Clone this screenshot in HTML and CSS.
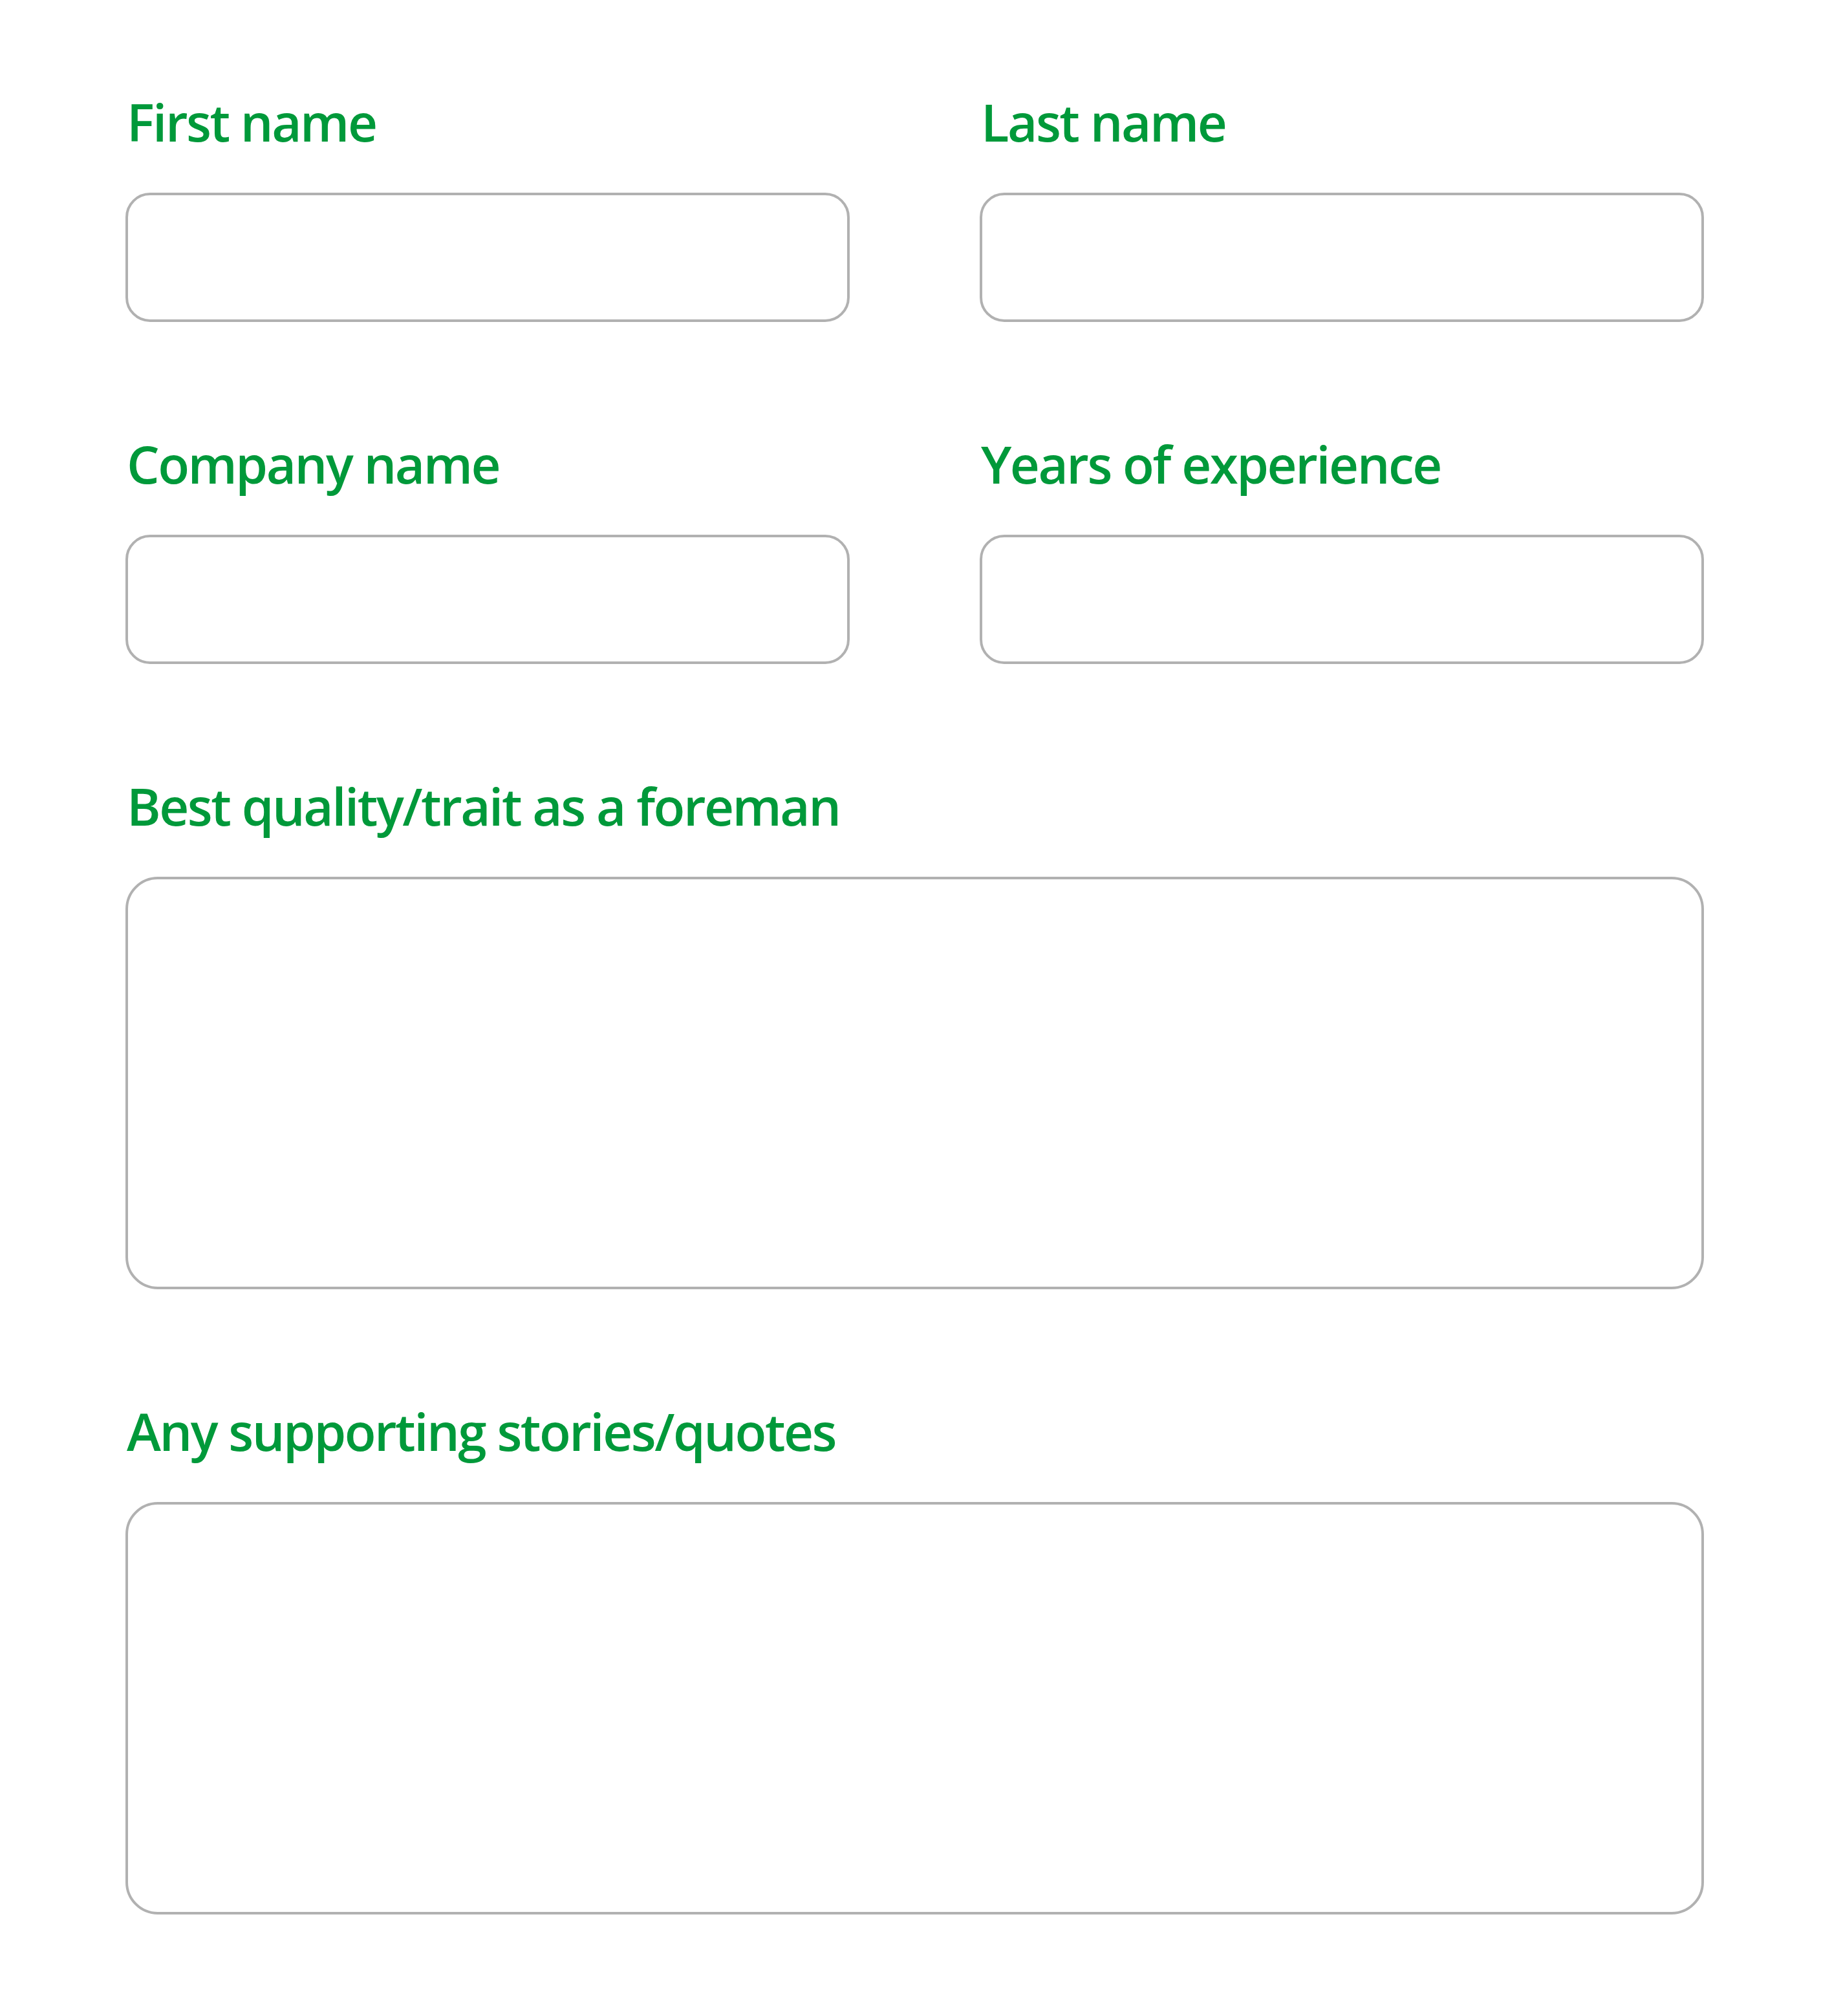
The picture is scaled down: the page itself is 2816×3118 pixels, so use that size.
FILE: index.html
```html
<!DOCTYPE html>
<html lang="en">
<head>
<meta charset="utf-8">
<title>Foreman nomination form</title>
<link rel="stylesheet" href="styles.css">
</head>
<body>
<form class="form">
  <div class="grid">
    <div class="field">
      <label class="label" for="first">First name</label>
      <input class="input" id="first" type="text">
    </div>
    <div class="field">
      <label class="label" for="last">Last name</label>
      <input class="input" id="last" type="text">
    </div>
    <div class="field">
      <label class="label" for="company">Company name</label>
      <input class="input" id="company" type="text">
    </div>
    <div class="field">
      <label class="label" for="years">Years of experience</label>
      <input class="input" id="years" type="text">
    </div>
    <div class="field wide">
      <label class="label" for="best">Best quality/trait as a foreman</label>
      <textarea class="area" id="best"></textarea>
    </div>
    <div class="field wide">
      <label class="label" for="stories">Any supporting stories/quotes</label>
      <textarea class="area" id="stories"></textarea>
    </div>
  </div>
</form>
</body>
</html>
```
FILE: styles.css
```css
html, body {
  margin: 0;
  padding: 0;
  background: #ffffff;
}
.form {
  padding: 138px 182px 150px 194px;
}
.grid {
  display: grid;
  grid-template-columns: 1120px 1120px;
  column-gap: 201px;
  row-gap: 169px;
}
.field {
  display: flex;
  flex-direction: column;
}
.wide {
  grid-column: 1 / -1;
}
.label {
  font-family: "Open Sans", "Noto Sans", sans-serif;
  font-weight: 600;
  font-size: 80px;
  line-height: 100px;
  color: #00993a;
  margin: 0 0 60px 2px;
  letter-spacing: -2.5px;
}
.input, .area {
  box-sizing: border-box;
  display: block;
  width: 100%;
  margin: 0;
  border: 4px solid #b1b1b1;
  background: #ffffff;
  outline: none;
  font-family: "Open Sans", sans-serif;
}
.input {
  height: 200px;
  border-radius: 38px;
}
.area {
  height: 638px;
  border-radius: 50px;
  resize: none;
}
```
